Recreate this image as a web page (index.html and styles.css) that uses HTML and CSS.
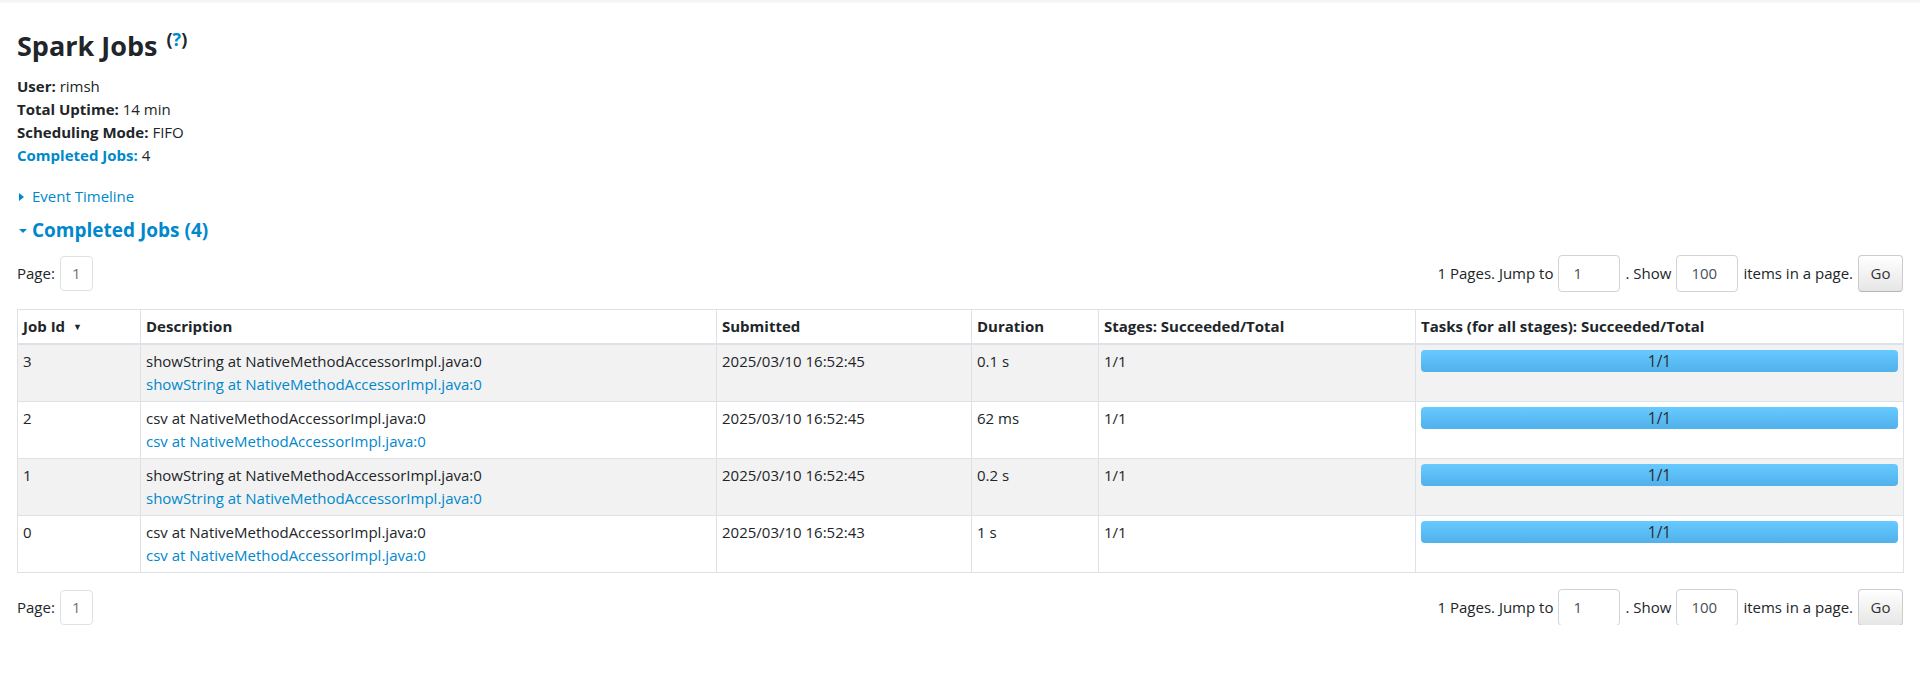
FILE: index.html
```html
<!DOCTYPE html>
<html lang="en">
<head>
<meta charset="utf-8">
<title>Spark Jobs</title>
<link rel="stylesheet" href="styles.css">
</head>
<body>
<div class="topbar"></div>
<div class="container">
  <h3 class="page-title">Spark Jobs <sup class="help">(<a class="help-link">?</a>)</sup></h3>

  <ul class="summary">
    <li><strong>User:</strong> rimsh</li>
    <li><strong>Total Uptime:</strong> 14 min</li>
    <li><strong>Scheduling Mode:</strong> FIFO</li>
    <li><a class="summary-link"><strong>Completed Jobs:</strong></a> 4</li>
  </ul>

  <div class="timeline">
    <span class="arrow-closed"></span><a class="link">Event Timeline</a>
  </div>

  <h4 class="section-title">
    <span class="arrow-open"></span><a class="section-link">Completed Jobs (4)</a>
  </h4>

  <div class="pager">
    <div class="page-left">
      <span class="page-label">Page:</span>
      <span class="page-box">1</span>
    </div>
    <form class="page-form">
      <label class="form-label">1 Pages. Jump to</label>
      <input class="form-input" type="text" value="1">
      <label class="form-label">. Show</label>
      <input class="form-input" type="text" value="100">
      <label class="form-label">items in a page.</label>
      <button class="btn-go" type="button">Go</button>
    </form>
  </div>

  <table class="jobs">
    <colgroup>
      <col class="c-id">
      <col class="c-desc">
      <col class="c-sub">
      <col class="c-dur">
      <col class="c-stages">
      <col class="c-tasks">
    </colgroup>
    <thead>
      <tr>
        <th>Job Id <span class="sort">&#9660;</span></th>
        <th>Description</th>
        <th>Submitted</th>
        <th>Duration</th>
        <th>Stages: Succeeded/Total</th>
        <th>Tasks (for all stages): Succeeded/Total</th>
      </tr>
    </thead>
    <tbody>
      <tr class="odd">
        <td>3</td>
        <td><span class="desc">showString at NativeMethodAccessorImpl.java:0</span><a class="link">showString at NativeMethodAccessorImpl.java:0</a></td>
        <td>2025/03/10 16:52:45</td>
        <td>0.1 s</td>
        <td>1/1</td>
        <td><div class="progress"><span class="progress-text">1/1</span></div></td>
      </tr>
      <tr>
        <td>2</td>
        <td><span class="desc">csv at NativeMethodAccessorImpl.java:0</span><a class="link">csv at NativeMethodAccessorImpl.java:0</a></td>
        <td>2025/03/10 16:52:45</td>
        <td>62 ms</td>
        <td>1/1</td>
        <td><div class="progress"><span class="progress-text">1/1</span></div></td>
      </tr>
      <tr class="odd">
        <td>1</td>
        <td><span class="desc">showString at NativeMethodAccessorImpl.java:0</span><a class="link">showString at NativeMethodAccessorImpl.java:0</a></td>
        <td>2025/03/10 16:52:45</td>
        <td>0.2 s</td>
        <td>1/1</td>
        <td><div class="progress"><span class="progress-text">1/1</span></div></td>
      </tr>
      <tr>
        <td>0</td>
        <td><span class="desc">csv at NativeMethodAccessorImpl.java:0</span><a class="link">csv at NativeMethodAccessorImpl.java:0</a></td>
        <td>2025/03/10 16:52:43</td>
        <td>1 s</td>
        <td>1/1</td>
        <td><div class="progress"><span class="progress-text">1/1</span></div></td>
      </tr>
    </tbody>
  </table>

  <div class="pager pager-bottom">
    <div class="page-left">
      <span class="page-label">Page:</span>
      <span class="page-box">1</span>
    </div>
    <form class="page-form">
      <label class="form-label">1 Pages. Jump to</label>
      <input class="form-input" type="text" value="1">
      <label class="form-label">. Show</label>
      <input class="form-input" type="text" value="100">
      <label class="form-label">items in a page.</label>
      <button class="btn-go" type="button">Go</button>
    </form>
  </div>
</div>
</body>
</html>
```

FILE: styles.css
```css
* { box-sizing: border-box; }

html, body {
  margin: 0;
  padding: 0;
  background: #fff;
}

body {
  font-family: "Open Sans", "Noto Sans", sans-serif;
  font-size: 15px;
  line-height: 23px;
  color: #212529;
}

a { color: #0088cc; text-decoration: none; cursor: pointer; }

.topbar {
  height: 3px;
  background: linear-gradient(#f2f2f2, #fafafa);
}

.container {
  padding: 0 17px;
}

.page-title {
  margin: 26px 0 0 0;
  font-size: 27px;
  line-height: 34px;
  font-weight: 700;
}

.help {
  font-size: 18px;
  font-weight: 700;
  vertical-align: 10px;
  line-height: 0;
  margin-left: 2px;
}

.help-link { color: #0088cc; }

.summary {
  list-style: none;
  margin: 12px 0 0 0;
  padding: 0;
}

.summary li { line-height: 23px; }

.summary-link { color: #0088cc; }

.timeline {
  margin-top: 18px;
  display: flex;
  align-items: center;
  padding-left: 2px;
}

.arrow-closed {
  display: inline-block;
  width: 0;
  height: 0;
  border-top: 4px solid transparent;
  border-bottom: 4px solid transparent;
  border-left: 5px solid #0088cc;
  margin-right: 8px;
}

.section-title {
  margin: 8px 0 0 0;
  font-size: 19px;
  line-height: 28px;
  font-weight: 700;
  display: flex;
  align-items: center;
  padding-left: 2px;
}

.arrow-open {
  display: inline-block;
  width: 0;
  height: 0;
  border-left: 4px solid transparent;
  border-right: 4px solid transparent;
  border-top: 4px solid #0088cc;
  margin-right: 5px;
  margin-top: 2px;
}

.section-link { color: #0088cc; }

.pager {
  margin-top: 11px;
  display: flex;
  justify-content: space-between;
  align-items: center;
  height: 36px;
}

.pager-bottom { margin-top: 16px; }

.page-left {
  display: flex;
  align-items: center;
  gap: 5px;
}

.page-box {
  display: inline-flex;
  align-items: center;
  justify-content: center;
  width: 33px;
  height: 35px;
  border: 1px solid #dee2e6;
  border-radius: 4px;
  color: #6c757d;
}

.page-form {
  display: flex;
  align-items: center;
  gap: 5px;
  margin: 0;
}

.form-label { white-space: nowrap; }

.form-input {
  width: 62px;
  height: 37px;
  border: 1px solid #ced4da;
  border-radius: 4px;
  padding: 0 14px;
  font-family: inherit;
  font-size: 15px;
  color: #495057;
  background: #fff;
}

.btn-go {
  width: 45px;
  height: 37px;
  border: 1px solid #ccc;
  border-bottom-color: #b3b3b3;
  border-radius: 4px;
  background: linear-gradient(#ffffff, #e6e6e6);
  font-family: inherit;
  font-size: 15px;
  color: #333;
  padding: 0;
}

.jobs {
  width: 100%;
  margin-top: 18px;
  border-collapse: collapse;
  table-layout: fixed;
  border: 1px solid #dee2e6;
}

.c-id { width: 123px; }
.c-desc { width: 576px; }
.c-sub { width: 255px; }
.c-dur { width: 127px; }
.c-stages { width: 317px; }
.c-tasks { width: 488px; }

.jobs th {
  text-align: left;
  font-weight: 700;
  padding: 5px;
  line-height: 23px;
  border: 1px solid #dee2e6;
  border-bottom: 2px solid #dee2e6;
  vertical-align: bottom;
}

.sort {
  font-size: 9px;
  vertical-align: 2px;
  margin-left: 4px;
}

.jobs td {
  padding: 5px;
  line-height: 23px;
  border: 1px solid #dee2e6;
  vertical-align: top;
}

.jobs tr.odd td { background: #f2f2f2; }

.desc {
  display: block;
  white-space: nowrap;
  overflow: hidden;
  text-overflow: ellipsis;
}

.progress {
  height: 22px;
  border-radius: 4px;
  background: linear-gradient(#66caff, #51b1eb);
  display: flex;
  align-items: center;
  justify-content: center;
}

.progress-text {
  color: #2b2b2b;
  font-size: 15.5px;
  line-height: 22px;
}
```
